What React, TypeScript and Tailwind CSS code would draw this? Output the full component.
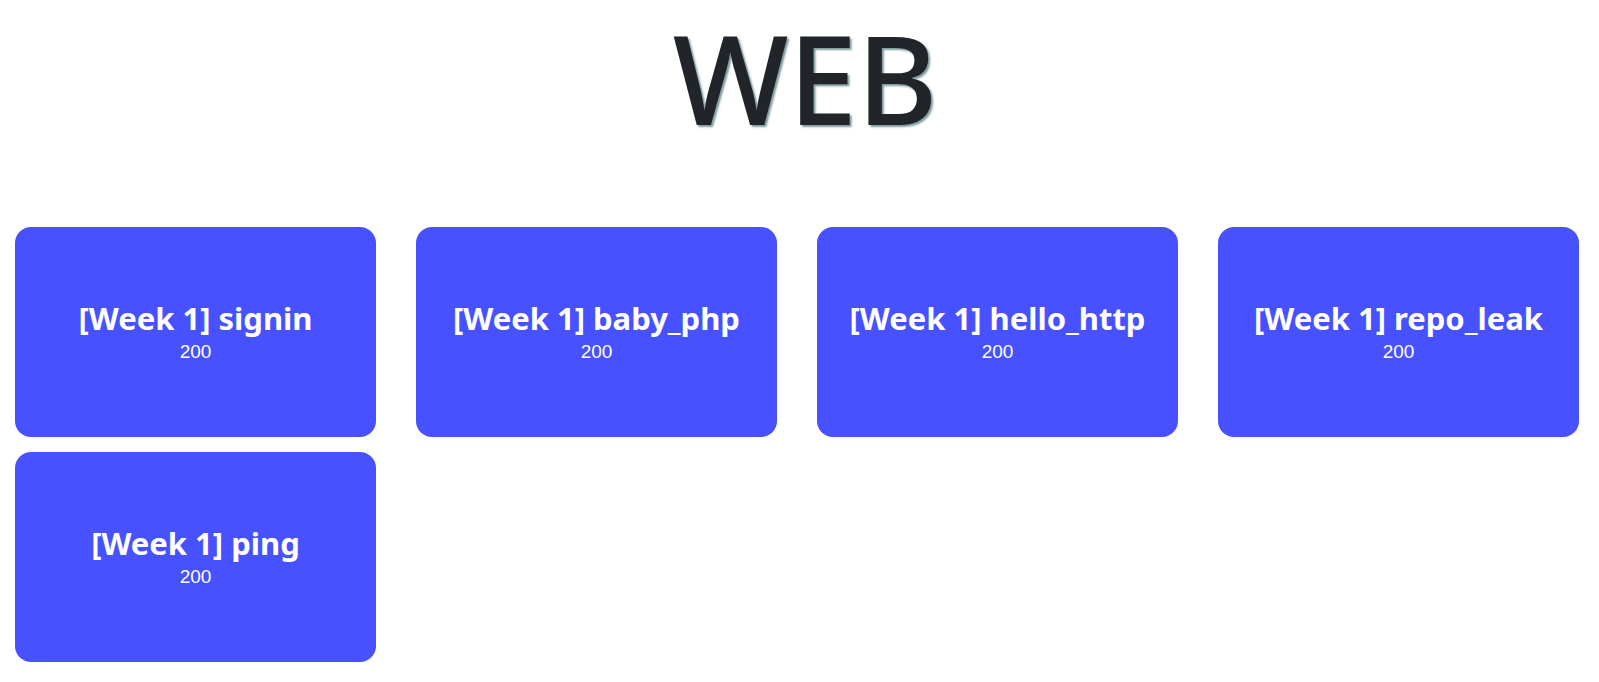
const challenges = [
  { name: '[Week 1] signin', score: 200 },
  { name: '[Week 1] baby_php', score: 200 },
  { name: '[Week 1] hello_http', score: 200 },
  { name: '[Week 1] repo_leak', score: 200 },
  { name: '[Week 1] ping', score: 200 },
];

const App: React.FC = () => {
  return (
    <div className="min-h-screen bg-white pl-[15px] pr-[20px]">
      {/* Category heading */}
      <div className="flex h-[227px] items-start justify-center pl-[16px]">
        <h1 className="-mt-[7px] font-['Noto_Sans',sans-serif] text-[123px] leading-[170px] font-medium text-[#212529] [text-shadow:2px_2px_2px_rgba(20,70,80,0.55)]">
          WEB
        </h1>
      </div>

      {/* Challenge cards */}
      <div className="grid grid-cols-4 gap-x-[40px] gap-y-[15px]">
        {challenges.map((c) => (
          <button
            key={c.name}
            className="flex h-[210px] flex-col items-center justify-center rounded-[16px] bg-[#4751ff] text-white"
          >
            <span className="font-['Noto_Sans',sans-serif] text-[31px] leading-[34px] font-bold">
              {c.name}
            </span>
            <span className="mt-[6px] font-['Liberation_Sans',Arial,sans-serif] text-[19px] leading-[22px]">
              {c.score}
            </span>
          </button>
        ))}
      </div>
    </div>
  );
};

export default App;
